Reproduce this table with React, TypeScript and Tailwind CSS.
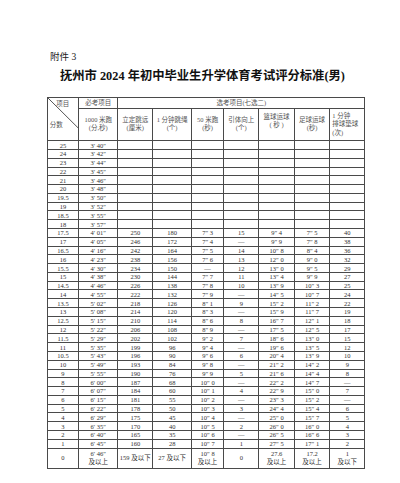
const FONT = { fontFamily: '"Liberation Serif", "Noto Sans CJK SC", serif' };

const colWidths = ["w-[31.6px]", "w-[39px]", "w-[35px]", "w-[38.7px]", "w-[32.3px]", "w-[35px]", "w-[35.7px]", "w-[35.3px]", "w-[35px]"];

const rows: string[][] = [
  ["25", "3′ 40″"],
  ["24", "3′ 42″"],
  ["23", "3′ 44″"],
  ["22", "3′ 45″"],
  ["21", "3′ 46″"],
  ["20", "3′ 48″"],
  ["19.5", "3′ 50″"],
  ["19", "3′ 52″"],
  ["18.5", "3′ 55″"],
  ["18", "3′ 57″"],
  ["17.5", "4′ 01″", "250", "180", "7″ 3", "15", "9″ 4", "7″ 5", "40"],
  ["17", "4′ 05″", "246", "172", "7″ 4", "—", "9″ 9", "7″ 8", "38"],
  ["16.5", "4′ 16″", "242", "164", "7″ 5", "14", "10″ 8", "8″ 4", "36"],
  ["16", "4′ 23″", "238", "156", "7″ 6", "13", "12″ 0", "9″ 0", "32"],
  ["15.5", "4′ 30″", "234", "150", "—", "12", "13″ 0", "9″ 5", "29"],
  ["15", "4′ 38″", "230", "144", "7″ 7", "11", "13″ 4", "9″ 9", "27"],
  ["14.5", "4′ 46″", "226", "138", "7″ 8", "10", "13″ 9", "10″ 3", "25"],
  ["14", "4′ 55″", "222", "132", "7″ 9", "—", "14″ 5", "10″ 7", "24"],
  ["13.5", "5′ 02″", "218", "126", "8″ 1", "9", "15″ 2", "11″ 2", "22"],
  ["13", "5′ 08″", "214", "120", "8″ 3", "—", "15″ 9", "11″ 7", "19"],
  ["12.5", "5′ 15″", "210", "114", "8″ 6", "8", "16″ 7", "12″ 1", "18"],
  ["12", "5′ 22″", "206", "108", "8″ 9", "—", "17″ 5", "12″ 5", "17"],
  ["11.5", "5′ 29″", "202", "102", "9″ 2", "7", "18″ 6", "13″ 0", "15"],
  ["11", "5′ 35″", "199", "96", "9″ 4", "—", "19″ 6", "13″ 5", "12"],
  ["10.5", "5′ 43″", "196", "90", "9″ 6", "6", "20″ 4", "13″ 9", "10"],
  ["10", "5′ 49″", "193", "84", "9″ 8", "—", "21″ 2", "14″ 2", "9"],
  ["9", "5′ 55″", "190", "76", "9″ 9", "5", "21″ 6", "14″ 4", "8"],
  ["8", "6′ 00″", "187", "68", "10″ 0", "—", "22″ 2", "14″ 7", "—"],
  ["7", "6′ 07″", "184", "60", "10″ 1", "4", "22″ 9", "15″ 0", "7"],
  ["6", "6′ 15″", "181", "55", "10″ 2", "—", "23″ 3", "15″ 2", "—"],
  ["5", "6′ 22″", "178", "50", "10″ 3", "3", "24″ 4", "15″ 4", "6"],
  ["4", "6′ 29″", "175", "45", "10″ 4", "—", "25″ 0", "15″ 7", "5"],
  ["3", "6′ 35″", "170", "40", "10″ 5", "2", "26″ 0", "16″ 0", "4"],
  ["2", "6′ 40″", "165", "35", "10″ 6", "—", "26″ 5", "16″ 6", "3"],
  ["1", "6′ 45″", "160", "28", "10″ 7", "1", "27″ 5", "17″ 1", "2"],
];

const lastRow = ["0", "6′ 46″\n及以上", "159 及以下", "27 及以下", "10″ 8\n及以上", "0", "27.6\n及以上", "17.2\n及以上", "1\n及以下"];

const cell = "border border-[#4a4a4a] p-0 text-center align-middle";

export default function App() {
  return (
    <div className="h-[483px] w-[400px] overflow-hidden bg-white text-[#333]" style={FONT}>
      <div className="pl-[50px] pt-[52px] text-[9.5px] leading-[11px] text-[#222]">附件 3</div>
      <h1 className="mt-[6px] pl-[60px] text-[12.3px] font-bold leading-[14px] text-[#111]">
        抚州市 2024 年初中毕业生升学体育考试评分标准(男)
      </h1>
      <table className="ml-[46.7px] mt-[14px] w-[317.6px] table-fixed border-collapse text-[6.5px] leading-[7px]">
        <colgroup>
          {colWidths.map((w, i) => (
            <col key={i} className={w} />
          ))}
        </colgroup>
        <thead className="text-[#555]">
          <tr className="h-[10.8px]">
            <td rowSpan={2} className={`${cell} relative`}>
              <svg className="absolute inset-0 h-full w-full" preserveAspectRatio="none" viewBox="0 0 100 100">
                <line x1="0" y1="0" x2="100" y2="72" stroke="#555" strokeWidth="1" vectorEffect="non-scaling-stroke" />
              </svg>
              <span className="absolute right-[9px] top-[2px]">项目</span>
              <span className="absolute bottom-[12px] left-[2px]">分数</span>
            </td>
            <td className={cell}>必考项目</td>
            <td colSpan={7} className={cell}>
              选考项目(七选二)
            </td>
          </tr>
          <tr className="h-[32.4px] leading-[8.5px]">
            <td className={`${cell} whitespace-pre-line`}>{"1000 米跑\n(分,秒)"}</td>
            <td className={`${cell} whitespace-pre-line`}>{"立定跳远\n(厘米)"}</td>
            <td className={`${cell} whitespace-pre-line`}>{"1 分钟跳绳\n(个)"}</td>
            <td className={`${cell} whitespace-pre-line`}>{"50 米跑\n(秒)"}</td>
            <td className={`${cell} whitespace-pre-line`}>{"引体向上\n(个)"}</td>
            <td className={`${cell} whitespace-pre-line pb-[6px]`}>{"篮球运球\n( 秒 )"}</td>
            <td className={`${cell} whitespace-pre-line`}>{"足球运球\n(秒)"}</td>
            <td className={`${cell} whitespace-pre-line pl-[2px] text-left`}>{"1 分钟\n排球垫球\n(次)"}</td>
          </tr>
        </thead>
        <tbody>
          {rows.map((r) => (
            <tr key={r[0]} className="h-[8.79px]">
              {Array.from({ length: 9 }).map((_, i) => (
                <td key={i} className={cell}>
                  {r[i] ?? ""}
                </td>
              ))}
            </tr>
          ))}
          <tr className="h-[20px] leading-[8.5px]">
            {lastRow.map((v, i) => (
              <td key={i} className={`${cell} whitespace-pre-line`}>
                {v}
              </td>
            ))}
          </tr>
        </tbody>
      </table>
    </div>
  );
}
